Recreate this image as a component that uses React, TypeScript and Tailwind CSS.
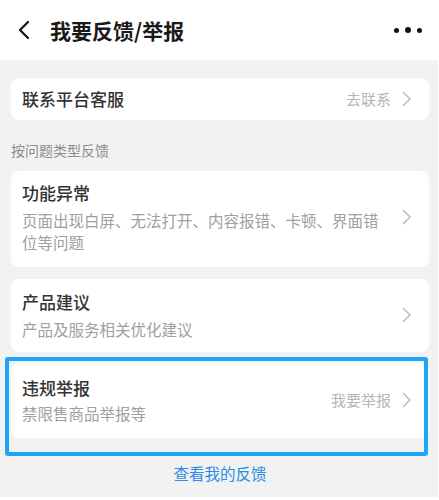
import React from "react";

const font = { fontFamily: '"Noto Sans CJK SC", "Noto Sans", sans-serif' };

const Chevron = () => (
  <svg width="10" height="16" viewBox="0 0 10 16" fill="none">
    <path d="M1.5 1.5 L8 8 L1.5 14.5" stroke="#bdbdbd" strokeWidth="1.6" strokeLinecap="round" strokeLinejoin="round" />
  </svg>
);

const items = [
  {
    title: "功能异常",
    desc: "页面出现白屏、无法打开、内容报错、卡顿、界面错位等问题",
    cls: "mt-[11px] pt-[10px] pb-[14px]",
  },
  {
    title: "产品建议",
    desc: "产品及服务相关优化建议",
    cls: "mt-[12px] pt-[11px] pb-[12px]",
  },
];

export default function App() {
  return (
    <div className="w-[439px] h-[500px] bg-white overflow-hidden" style={font}>
      {/* header */}
      <div className="h-[60px] flex items-center pl-[17px] pr-[17px]">
        <svg width="14" height="20" viewBox="0 0 14 20" fill="none">
          <path d="M11 2 L3 10 L11 18" stroke="#111" strokeWidth="2.2" strokeLinecap="round" strokeLinejoin="round" />
        </svg>
        <h1 className="ml-[19px] text-[21px] leading-[28px] font-bold text-[#1a1a1a]">我要反馈/举报</h1>
        <div className="ml-auto flex items-center gap-[6px]">
          <span className="w-[5px] h-[5px] rounded-full bg-[#111]"></span>
          <span className="w-[6px] h-[6px] rounded-full bg-[#111]"></span>
          <span className="w-[5px] h-[5px] rounded-full bg-[#111]"></span>
        </div>
      </div>

      {/* content */}
      <div className="w-[438px] h-[437px] bg-[#f2f2f2] pl-[11px] pr-[9px] pt-[18px] flex flex-col">
        <div className="h-[42px] bg-white rounded-[8px] flex items-center pl-[11px] pr-[17px]">
          <span className="text-[17px] font-medium text-[#333]">联系平台客服</span>
          <span className="ml-auto text-[15px] text-[#b5b5b5] mr-[11px]">去联系</span>
          <Chevron />
        </div>

        <p className="mt-[20px] text-[14px] leading-[20px] text-[#8c8c8c]">按问题类型反馈</p>

        {items.map((item, i) => (
          <div key={i} className={"bg-white rounded-[8px] flex items-center pl-[11px] pr-[17px] " + item.cls}>
            <div className="flex-1 pr-[14px]">
              <div className="text-[17px] leading-[24px] font-medium text-[#333]">{item.title}</div>
              <div className="mt-[4px] text-[15.5px] leading-[22px] text-[#a0a0a0]">{item.desc}</div>
            </div>
            <Chevron />
          </div>
        ))}

        <div className="relative mt-[11px]">
          <div className="h-[75px] bg-white rounded-[8px] flex items-center pl-[11px] pr-[17px] pt-[12px] pb-[13px]">
            <div className="flex-1">
              <div className="text-[17px] leading-[24px] font-medium text-[#333]">违规举报</div>
              <div className="mt-[2px] text-[15.5px] leading-[22px] text-[#a0a0a0]">禁限售商品举报等</div>
            </div>
            <span className="text-[15px] text-[#b5b5b5] mr-[11px]">我要举报</span>
            <Chevron />
          </div>
          {/* highlight frame */}
          <div className="absolute left-[-6px] top-[-6px] right-[1px] bottom-[-18px] border-[4px] border-[#1ea5f5] rounded-[3px]"></div>
        </div>

        <div className="mt-[24px] text-center text-[15.5px] leading-[22px] text-[#2a8ce6]">查看我的反馈</div>
      </div>
    </div>
  );
}
